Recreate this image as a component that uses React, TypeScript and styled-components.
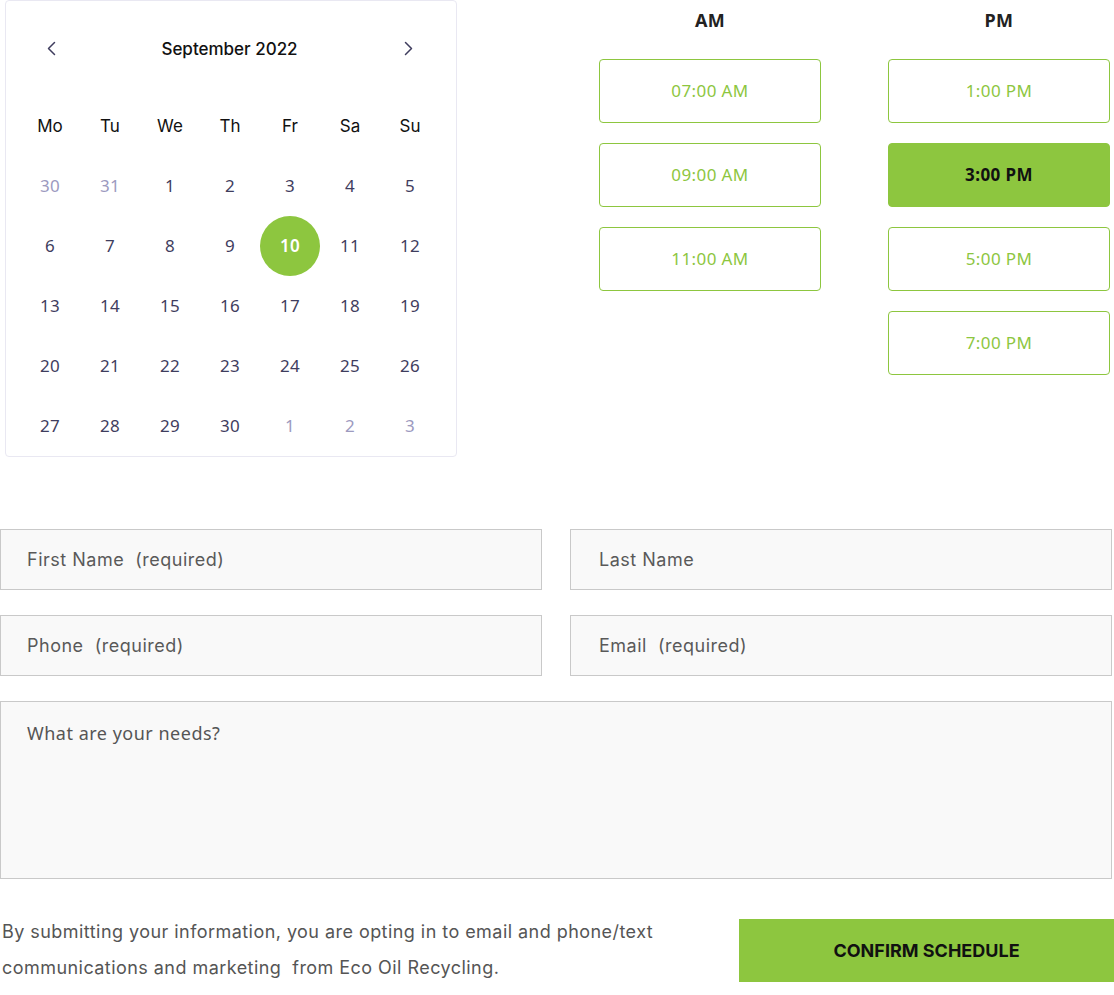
import React, {FC} from 'react';
import styled, {createGlobalStyle} from 'styled-components';

const GlobalStyle = createGlobalStyle`
  html, body {
    margin: 0;
    padding: 0;
    background: #fff;
  }
  * {
    box-sizing: border-box;
  }
`

const green = '#8dc63f'
const ink = '#3f3d5e'

const Page = styled.div`
  width: 1114px;
  font-family: "Open Sans", sans-serif;
`

const Top = styled.div`
  display: flex;
  align-items: flex-start;
  padding-left: 5px;
`

const Card = styled.div`
  width: 452px;
  height: 457px;
  border: 1px solid #e9e8f2;
  border-radius: 4px;
  padding: 0 16px 0 14px;
  display: grid;
  grid-template-rows: 95px 60px repeat(5, 60px);
`

const Header = styled.div`
  display: flex;
  align-items: center;
  justify-content: space-between;
  padding: 0 25px 0 24px;
`

const Title = styled.div`
  font-family: "Inter", sans-serif;
  font-size: 17px;
  font-weight: 500;
  color: #111;
`

const Arrow = styled.button`
  border: none;
  background: none;
  padding: 0;
  width: 14px;
  height: 20px;
  display: flex;
  align-items: center;
  justify-content: center;
  cursor: pointer;
`

const Week = styled.div`
  display: grid;
  grid-template-columns: repeat(7, 60px);
`

const DayName = styled.div`
  display: flex;
  align-items: center;
  justify-content: center;
  font-family: "Inter", sans-serif;
  font-size: 17px;
  color: #111;
`

const Day = styled.div<{ $muted?: boolean; $selected?: boolean }>`
  display: flex;
  align-items: center;
  justify-content: center;
  width: 60px;
  height: 60px;
  padding-bottom: 1px;
  border-radius: 50%;
  font-family: "Noto Sans", sans-serif;
  font-size: 17px;
  letter-spacing: 0.3px;
  font-weight: ${p => p.$selected ? 600 : 400};
  color: ${p => p.$selected ? '#fff' : p.$muted ? '#9c9abf' : ink};
  background: ${p => p.$selected ? green : 'transparent'};
`

const Slots = styled.div`
  margin-left: 142px;
  display: grid;
  grid-template-columns: 222px 222px;
  column-gap: 67px;
`

const Column = styled.div`
  display: flex;
  flex-direction: column;
  gap: 20px;
`

const ColTitle = styled.div`
  height: 39px;
  display: flex;
  align-items: center;
  justify-content: center;
  font-family: "Noto Sans", sans-serif;
  font-weight: 700;
  font-size: 18px;
  letter-spacing: 0.4px;
  color: #222;
`

const Slot = styled.button<{ $active?: boolean }>`
  height: 64px;
  border: 1px solid ${green};
  border-radius: 4px;
  background: ${p => p.$active ? green : '#fff'};
  color: ${p => p.$active ? '#111' : green};
  font-family: "Noto Sans", sans-serif;
  font-size: 17px;
  letter-spacing: 0.4px;
  font-weight: ${p => p.$active ? 700 : 400};
  padding: 0 0 2px;
  cursor: pointer;
`

const Form = styled.form`
  margin-top: 72px;
  display: flex;
  flex-direction: column;
  gap: 25px;
`

const Row = styled.div`
  display: grid;
  grid-template-columns: 542px 542px;
  column-gap: 28px;
`

const Field = styled.input<{ $inset?: number }>`
  height: 61px;
  border: 1px solid #c9c9c9;
  background: #f9f9f9;
  padding: 0 26px 0 ${p => p.$inset ?? 26}px;
  font-family: "Inter", sans-serif;
  font-size: 18px;
  letter-spacing: 0.5px;
  color: #555;
  outline: none;
  &::placeholder {
    color: #595959;
    white-space: pre;
  }
`

const Needs = styled.textarea`
  width: 1112px;
  height: 178px;
  border: 1px solid #c9c9c9;
  background: #f9f9f9;
  padding: 19px 26px;
  font-family: "Noto Sans", sans-serif;
  font-size: 18px;
  letter-spacing: 0.5px;
  resize: none;
  outline: none;
  &::placeholder {
    color: #555;
  }
`

const Bottom = styled.div`
  margin-top: 10px;
  display: flex;
  align-items: center;
  justify-content: space-between;
`

const Note = styled.p`
  margin: 0 0 0 2px;
  width: 700px;
  font-family: "Inter", sans-serif;
  font-size: 18px;
  letter-spacing: 0.45px;
  line-height: 36px;
  color: #555;
`

const Confirm = styled.button`
  width: 375px;
  height: 63px;
  border: none;
  background: ${green};
  color: #111;
  font-family: "Inter", sans-serif;
  font-size: 18px;
  font-weight: 700;
  text-transform: uppercase;
  cursor: pointer;
`

const Chevron: FC<{ dir: 'left' | 'right' }> = ({dir}) => (
    <svg width="9" height="15" viewBox="0 0 9 15" fill="none">
        <polyline
            points={dir === 'left' ? '7.5,1.5 1.5,7.5 7.5,13.5' : '1.5,1.5 7.5,7.5 1.5,13.5'}
            stroke={ink}
            strokeWidth="1.5"
            strokeLinecap="round"
            strokeLinejoin="round"
        />
    </svg>
)

const dayNames = ['Mo', 'Tu', 'We', 'Th', 'Fr', 'Sa', 'Su']

// september 2022, monday first
const weeks: { n: number; muted?: boolean }[][] = [
    [{n: 30, muted: true}, {n: 31, muted: true}, {n: 1}, {n: 2}, {n: 3}, {n: 4}, {n: 5}],
    [6, 7, 8, 9, 10, 11, 12].map(n => ({n})),
    [13, 14, 15, 16, 17, 18, 19].map(n => ({n})),
    [20, 21, 22, 23, 24, 25, 26].map(n => ({n})),
    [{n: 27}, {n: 28}, {n: 29}, {n: 30}, {n: 1, muted: true}, {n: 2, muted: true}, {n: 3, muted: true}],
]

const amSlots = ['07:00 AM', '09:00 AM', '11:00 AM']
const pmSlots = ['1:00 PM', '3:00 PM', '5:00 PM', '7:00 PM']

export default function App() {
    return (
        <Page>
            <GlobalStyle/>
            <Top>
                <Card>
                    <Header>
                        <Arrow aria-label="previous month"><Chevron dir="left"/></Arrow>
                        <Title>September 2022</Title>
                        <Arrow aria-label="next month"><Chevron dir="right"/></Arrow>
                    </Header>
                    <Week>
                        {dayNames.map(d => <DayName key={d}>{d}</DayName>)}
                    </Week>
                    {weeks.map((w, i) => (
                        <Week key={i}>
                            {w.map((d, j) => (
                                <Day key={j} $muted={d.muted} $selected={!d.muted && d.n === 10}>{d.n}</Day>
                            ))}
                        </Week>
                    ))}
                </Card>
                <Slots>
                    <Column>
                        <ColTitle>AM</ColTitle>
                        {amSlots.map(s => <Slot key={s} type="button">{s}</Slot>)}
                    </Column>
                    <Column>
                        <ColTitle>PM</ColTitle>
                        {pmSlots.map(s => <Slot key={s} type="button" $active={s === '3:00 PM'}>{s}</Slot>)}
                    </Column>
                </Slots>
            </Top>
            <Form onSubmit={e => e.preventDefault()}>
                <Row>
                    <Field placeholder="First Name  (required)"/>
                    <Field $inset={28} placeholder="Last Name"/>
                </Row>
                <Row>
                    <Field placeholder="Phone  (required)"/>
                    <Field $inset={28} placeholder="Email  (required)"/>
                </Row>
                <Needs placeholder="What are your needs?"/>
                <Bottom>
                    <Note>
                        By submitting your information, you are opting in to email and phone/text
                        communications and marketing&nbsp; from Eco Oil Recycling.
                    </Note>
                    <Confirm type="submit">Confirm Schedule</Confirm>
                </Bottom>
            </Form>
        </Page>
    )
}
